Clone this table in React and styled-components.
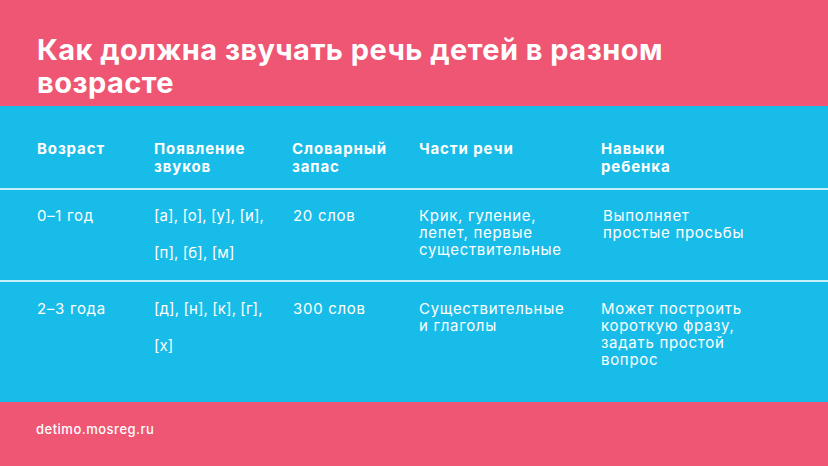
import styled, { createGlobalStyle } from "styled-components";

const GlobalStyle = createGlobalStyle`
    html, body {
        margin: 0;
        padding: 0;
        width: 828px;
        height: 466px;
        overflow: hidden;
    }
    body {
        font-family: Inter, "Noto Sans", sans-serif;
        color: #fff;
    }
`;

const columns = ["Возраст", "Появление звуков", "Словарный запас", "Части речи", "Навыки ребенка"];

const rows = [
    {
        age: "0–1 год",
        sounds: ["[а], [о], [у], [и],", "[п], [б], [м]"],
        words: "20 слов",
        parts: "Крик, гуление, лепет, первые существительные",
        skills: "Выполняет простые просьбы",
    },
    {
        age: "2–3 года",
        sounds: ["[д], [н], [к], [г],", "[х]"],
        words: "300 слов",
        parts: "Существительные и глаголы",
        skills: "Может построить короткую фразу, задать простой вопрос",
    },
];

const App = () => {
    return (
        <>
            <GlobalStyle />
            <Slide>
                <Header>
                    <Title>Как должна звучать речь детей в разном возрасте</Title>
                </Header>
                <Table>
                    <HeadRow>
                        {columns.map((c) => (
                            <HeadCell key={c}>{c}</HeadCell>
                        ))}
                    </HeadRow>
                    {rows.map((r, i) => (
                        <Row key={r.age} $last={i === rows.length - 1}>
                            <Cell>{r.age}</Cell>
                            <Sounds>
                                {r.sounds.map((s) => (
                                    <span key={s}>{s}</span>
                                ))}
                            </Sounds>
                            <Cell $shift={1}>{r.words}</Cell>
                            <Cell $max={152}>{r.parts}</Cell>
                            <Cell $max={150} $shift={i === 0 ? 2 : 0}>{r.skills}</Cell>
                        </Row>
                    ))}
                </Table>
                <Footer>detimo.mosreg.ru</Footer>
            </Slide>
        </>
    );
};

export default App;

const Slide = styled.div`
    width: 828px;
    height: 466px;
    display: flex;
    flex-direction: column;
    background: #17bce8;
`;

const Header = styled.div`
    height: 106px;
    box-sizing: border-box;
    background: #ee5673;
    padding: 33px 0 0 37px;
`;

const Title = styled.h1`
    margin: 0;
    width: 720px;
    font-size: 29px;
    font-weight: 700;
    line-height: 33px;
    letter-spacing: 0.45px;
`;

const Table = styled.div`
    flex: 1;
    display: flex;
    flex-direction: column;
`;

const grid = `
    display: grid;
    grid-template-columns: 117px 138px 127px 182px 1fr;
    padding-left: 37px;
    box-sizing: border-box;
`;

const HeadRow = styled.div`
    ${grid}
    height: 84px;
    padding-top: 34px;
    border-bottom: 2px solid #c4f0fc;
`;

const HeadCell = styled.div`
    font-size: 15px;
    font-weight: 700;
    line-height: 18px;
    letter-spacing: 0.9px;
    max-width: 100px;
`;

const Row = styled.div`
    ${grid}
    height: ${(p) => (p.$last ? "auto" : "92px")};
    flex: ${(p) => (p.$last ? 1 : "none")};
    padding-top: ${(p) => (p.$last ? "18px" : "17px")};
    border-bottom: ${(p) => (p.$last ? "none" : "2px solid #c4f0fc")};
`;

const Cell = styled.div`
    font-size: 15px;
    font-weight: 400;
    line-height: 17px;
    letter-spacing: 0.7px;
    padding-left: ${(p) => p.$shift || 0}px;
    max-width: ${(p) => (p.$max ? `${p.$max}px` : "none")};
`;

const Sounds = styled.div`
    display: flex;
    flex-direction: column;
    gap: 20px;
    font-size: 15px;
    line-height: 17px;
    letter-spacing: 0.1px;
`;

const Footer = styled.div`
    height: 64px;
    box-sizing: border-box;
    background: #ee5673;
    padding: 19px 0 0 36px;
    font-size: 13px;
    font-weight: 500;
    line-height: 17px;
    letter-spacing: 0.5px;
`;
